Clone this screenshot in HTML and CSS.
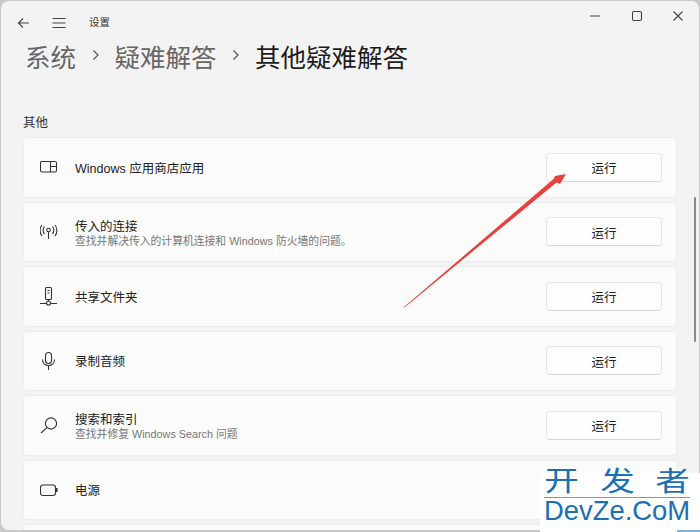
FILE: index.html
```html
<!DOCTYPE html>
<html lang="zh-CN">
<head>
    <meta charset="UTF-8">
    <title>设置</title>
    <link rel="stylesheet" href="styles.css">
</head>
<body>
    <div class="window">
        <div class="titlebar">
            <svg class="nav-icon back" width="14" height="14" viewBox="0 0 14 14"><path d="M13 7H2.500M7 2.500L2.500 7 7 11.500"/></svg>
            <svg class="nav-icon menu" width="14" height="14" viewBox="0 0 14 14"><path d="M.5 2.500h13M.5 7h13M.5 11.500h13"/></svg>
            <span class="app-name">设置</span>
            <div class="win-controls">
                <svg class="nav-icon" width="12" height="12" viewBox="0 0 12 12"><path d="M1 6h10"/></svg>
                <svg class="nav-icon" width="12" height="12" viewBox="0 0 12 12"><rect x="1.500" y="1.500" width="9" height="9" rx="1.500"/></svg>
                <svg class="nav-icon" width="12" height="12" viewBox="0 0 12 12"><path d="M1.500 1.500l9 9M10.500 1.500l-9 9"/></svg>
            </div>
        </div>

        <div class="breadcrumb">
            <span class="crumb">系统</span>
            <svg class="chevron" width="10" height="12" viewBox="0 0 10 12"><path d="M2.500 1.500L7 6l-4.500 4.500"/></svg>
            <span class="crumb">疑难解答</span>
            <svg class="chevron" width="10" height="12" viewBox="0 0 10 12"><path d="M2.500 1.500L7 6l-4.500 4.500"/></svg>
            <span class="crumb current">其他疑难解答</span>
        </div>

        <div class="section-title">其他</div>

        <div class="list">
            <div class="card">
                <svg class="card-icon" width="20" height="20" viewBox="0 0 20 20"><rect x=".5" y="4.500" width="16" height="10.500" rx="1.500"/><path d="M10.500 4.500V15M10.500 9.500h6"/></svg>
                <div class="card-text"><div class="card-title">Windows 应用商店应用</div></div>
                <button class="run">运行</button>
            </div>
            <div class="card">
                <svg class="card-icon" width="20" height="20" viewBox="0 0 20 20"><circle cx="8.500" cy="8" r="1.800"/><path d="M8.500 10v7M4.500 4.500c-1.800 2-1.800 5.500 0 7.500M12.500 4.500c1.800 2 1.800 5.500 0 7.500M2 3c-2.500 3-2.500 8 0 11M15 3c2.500 3 2.500 8 0 11"/></svg>
                <div class="card-text">
                    <div class="card-title">传入的连接</div>
                    <div class="card-desc">查找并解决传入的计算机连接和 Windows 防火墙的问题。</div>
                </div>
                <button class="run">运行</button>
            </div>
            <div class="card">
                <svg class="card-icon" width="20" height="20" viewBox="0 0 20 20"><rect x="5.500" y="1.500" width="6" height="12" rx="1"/><path d="M7.500 4.500h2M7.500 7h2M8.500 13.500v2M0 17.500h6.500M10.500 17.500H17"/><circle cx="8.500" cy="17" r="2"/></svg>
                <div class="card-text"><div class="card-title">共享文件夹</div></div>
                <button class="run">运行</button>
            </div>
            <div class="card">
                <svg class="card-icon" width="20" height="20" viewBox="0 0 20 20"><rect x="5.500" y="1.500" width="6" height="11" rx="3"/><path d="M2.500 8.500c0 3.500 2.500 6 6 6s6-2.500 6-6M8.500 14.500v4.500"/></svg>
                <div class="card-text"><div class="card-title">录制音频</div></div>
                <button class="run">运行</button>
            </div>
            <div class="card">
                <svg class="card-icon" width="20" height="20" viewBox="0 0 20 20"><circle cx="11" cy="8.500" r="5.600"/><path d="M7 12.700L1 18"/></svg>
                <div class="card-text">
                    <div class="card-title">搜索和索引</div>
                    <div class="card-desc">查找并修复 Windows Search 问题</div>
                </div>
                <button class="run">运行</button>
            </div>
            <div class="card no-button">
                <svg class="card-icon" width="20" height="20" viewBox="0 0 20 20"><rect x=".5" y="5" width="15" height="10.500" rx="2.500"/><path class="cap" d="M16 8.500h1v3h-1z"/></svg>
                <div class="card-text"><div class="card-title">电源</div></div>
            </div>
            <div class="card partial"></div>
        </div>

        <div class="scrollbar"></div>
    </div>

    <!-- annotation and watermark sit on top of the window -->
    <svg class="arrow" width="700" height="532" viewBox="0 0 700 532"><polygon points="404,307 553.500,179 555,176 566,174 560,184 556.500,182.500 404.500,307.500"/></svg>
    <div class="watermark">
        <div class="wm-top"><span class="wm-char">开</span><span class="wm-char">发</span><span class="wm-char">者</span></div>
        <div class="wm-bottom">DevZe.CoM</div>
    </div>
    <div class="corner-strip"></div>
</body>
</html>
```

FILE: styles.css
```css
html, body {
    height: 100%;
    margin: 0;
    padding: 0;
    overflow: hidden;
}

body {
    font-family: "Liberation Sans", "Noto Sans CJK SC", sans-serif;
    background-color: #c9c9c9;
    width: 700px;
    height: 532px;
    position: relative;
}

.window {
    position: relative;
    box-sizing: border-box;
    height: 529px;
    margin: 1px 1px 0 1px;
    background-color: #f3f3f3;
    border-radius: 8px;
    overflow: hidden;
}

.titlebar {
    display: flex;
    align-items: center;
    height: 44px;
    padding: 0 15px 0 15px;
}

.nav-icon {
    fill: none;
    stroke: #444;
    stroke-width: 1.100;
    flex-shrink: 0;
}

.menu {
    margin-left: 22px;
}

.app-name {
    margin-left: 23px;
    padding-bottom: 3px;
    font-size: 10.500px;
    color: #333;
}

.win-controls {
    margin-left: auto;
    display: flex;
    gap: 29.500px;
    margin-top: -15px;
}

.breadcrumb {
    display: flex;
    align-items: center;
    height: 28px;
    padding-left: 24px;
    margin-top: -4px;
    font-size: 25.500px;
    color: #666;
}

.chevron {
    fill: none;
    stroke: #555;
    stroke-width: 1.200;
    margin: 0 14px 0 14.500px;
}

.current {
    color: #1c1c1c;
}

.section-title {
    margin: 45px 0 0 22px;
    font-size: 12.500px;
    line-height: 18px;
    color: #333;
}

.list {
    display: flex;
    flex-direction: column;
    gap: 4px;
    margin: 5px 0 0 22px;
    width: 654px;
}

.card {
    display: flex;
    align-items: center;
    box-sizing: border-box;
    height: 60.500px;
    flex-shrink: 0;
    padding: 0 14px 0 16px;
    background-color: #fbfbfb;
    border: 1px solid #ececec;
    border-radius: 4px;
}

.card-icon {
    fill: none;
    stroke: #333;
    stroke-width: 1.100;
    flex-shrink: 0;
}

.cap {
    fill: #333;
}

.card-text {
    flex: 1;
    margin-left: 15px;
    padding-top: 3px;
}

.card-title {
    font-size: 12.500px;
    line-height: 16px;
    color: #222;
}

.card-desc {
    font-size: 10.800px;
    line-height: 13px;
    color: #777;
}

.run {
    width: 116px;
    height: 29px;
    padding: 1px 0 0;
    font-family: inherit;
    font-size: 12.500px;
    color: #222;
    background-color: #fefefe;
    border: 1px solid #e6e6e6;
    border-bottom-color: #d6d6d6;
    border-radius: 4px;
    cursor: pointer;
}

.scrollbar {
    position: absolute;
    top: 196px;
    right: 3px;
    width: 2px;
    height: 145px;
    background-color: #8a8a8a;
    border-radius: 1px;
}

.arrow {
    position: absolute;
    top: 0;
    left: 0;
    fill: #e8403a;
}

.watermark {
    position: absolute;
    left: 540px;
    right: 0;
    top: 473px;
    bottom: 0;
    padding-left: 4px;
    color: #1a6fb5;
    background-color: #fff;
}

.wm-top {
    display: flex;
    justify-content: space-between;
    width: 146px;
    height: 24px;
    border-bottom: 1px solid #5aa5d8;
}

.wm-char {
    display: block;
    width: 35px;
    font-size: 27px;
    line-height: 19px;
    text-align: center;
    transform: scaleX(1.280);
}

.wm-bottom {
    font-size: 27.400px;
    line-height: 24px;
    margin-top: 1px;
    white-space: nowrap;
}

.corner-strip {
    position: absolute;
    left: 677px;
    right: 0;
    top: 530px;
    bottom: 0;
    background-color: #7fb2d8;
}
```
